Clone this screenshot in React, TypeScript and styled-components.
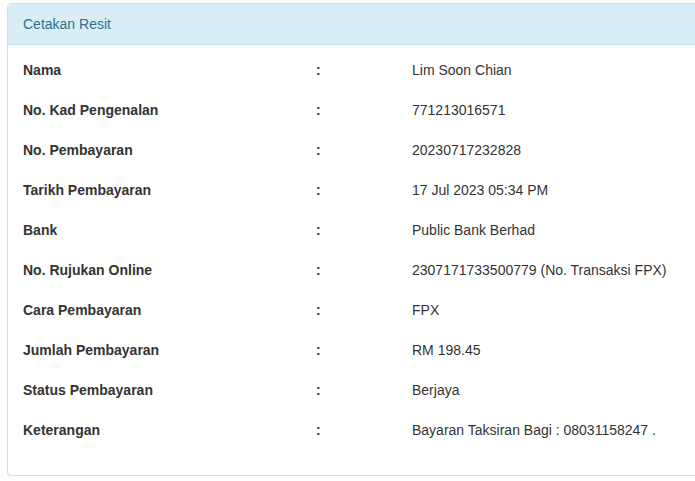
import React from 'react';
import styled, { createGlobalStyle } from 'styled-components';

const GlobalStyle = createGlobalStyle`
  html, body {
    margin: 0;
    padding: 0;
    background: #ffffff;
    font-family: "Liberation Sans", Arial, sans-serif;
    font-size: 14px;
    color: #333333;
  }
`;

const Page = styled.div`
  padding: 3px 0 0 7px;
  overflow: hidden;
`;

const Panel = styled.div`
  width: 720px;
  border: 1px solid #bce8f1;
  border-radius: 4px;
  background: #ffffff;
  box-shadow: 0 1px 1px rgba(0, 0, 0, 0.05);
`;

const PanelHeading = styled.div`
  padding: 10px 15px;
  line-height: 20px;
  font-size: 14px;
  color: #31708f;
  background: #d9edf7;
  border-bottom: 1px solid #bce8f1;
  border-radius: 3px 3px 0 0;
`;

const PanelBody = styled.div`
  padding: 5px 15px 5px 15px;
`;

const Table = styled.table`
  border-collapse: collapse;
  margin-bottom: 20px;
`;

const Row = styled.tr`
  height: 40px;
`;

const Cell = styled.td<{ $width?: number; $bold?: boolean }>`
  padding: 0;
  vertical-align: middle;
  line-height: 20px;
  width: ${({ $width }) => ($width ? `${$width}px` : 'auto')};
  font-weight: ${({ $bold }) => ($bold ? 700 : 400)};
  white-space: nowrap;
`;

const rows = [
  ['Nama', 'Lim Soon Chian'],
  ['No. Kad Pengenalan', '771213016571'],
  ['No. Pembayaran', '20230717232828'],
  ['Tarikh Pembayaran', '17 Jul 2023 05:34 PM'],
  ['Bank', 'Public Bank Berhad'],
  ['No. Rujukan Online', '2307171733500779 (No. Transaksi FPX)'],
  ['Cara Pembayaran', 'FPX'],
  ['Jumlah Pembayaran', 'RM 198.45'],
  ['Status Pembayaran', 'Berjaya'],
  ['Keterangan', 'Bayaran Taksiran Bagi : 08031158247 .'],
];

export default function App() {
  return (
    <>
      <GlobalStyle />
      <Page>
        <Panel>
          <PanelHeading>Cetakan Resit</PanelHeading>
          <PanelBody>
            <Table>
              <tbody>
                {rows.map(([label, value]) => (
                  <Row key={label}>
                    <Cell $width={293} $bold>{label}</Cell>
                    <Cell $width={96} $bold>:</Cell>
                    <Cell>{value}</Cell>
                  </Row>
                ))}
              </tbody>
            </Table>
          </PanelBody>
        </Panel>
      </Page>
    </>
  );
}
